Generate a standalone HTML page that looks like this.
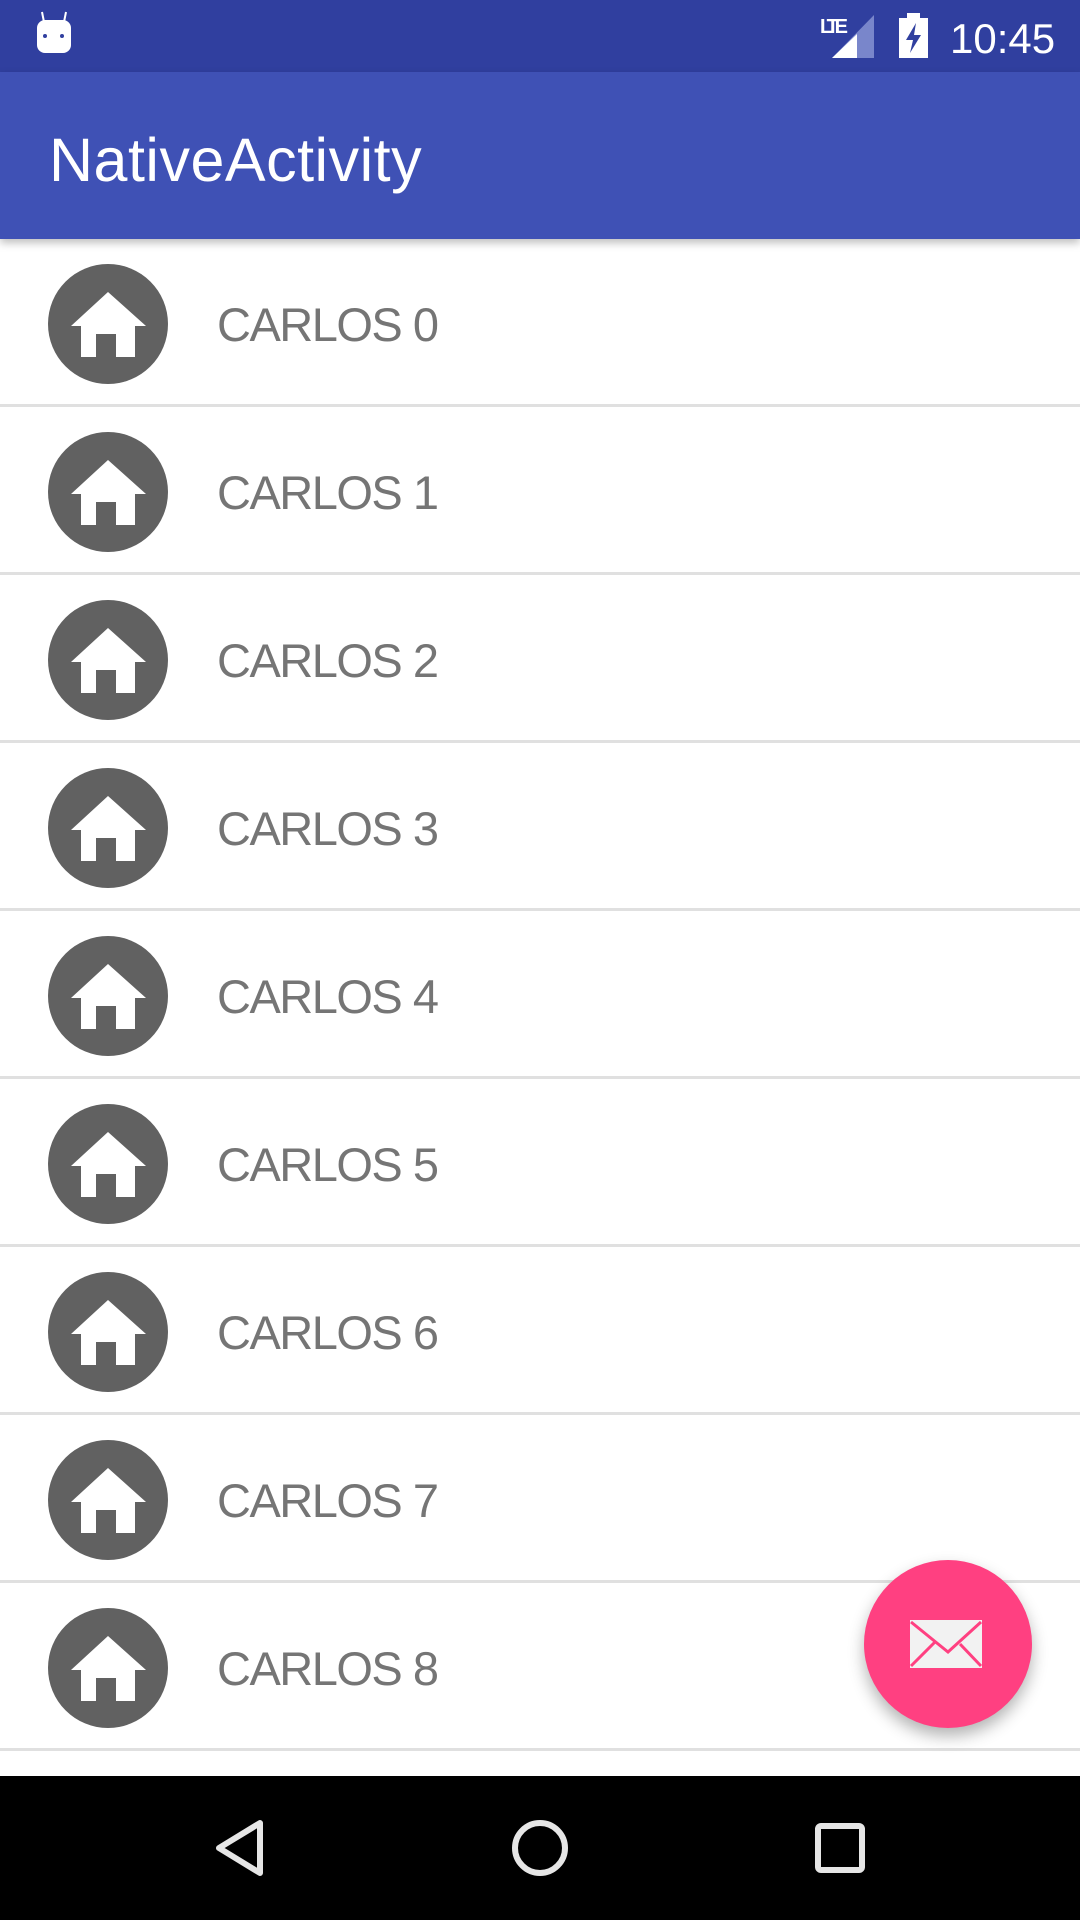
<!DOCTYPE html>
<html><head><meta charset="utf-8"><style>
*{margin:0;padding:0;box-sizing:border-box}
body{width:1080px;height:1920px;overflow:hidden;background:#fff;font-family:"Liberation Sans",sans-serif;position:relative}
.sb{position:absolute;left:0;top:0;width:1080px;height:72px;background:#303f9f}
.ab{position:absolute;left:0;top:72px;width:1080px;height:167px;background:#3f51b5;box-shadow:0 4px 8px rgba(0,0,0,.25);z-index:2}
.ab span{position:absolute;left:49px;top:88px;line-height:0;font-size:61px;letter-spacing:0.5px;color:#fff}
.row{position:absolute;left:0;width:1080px;height:168px;border-bottom:3px solid #e0e0e0}
.row .c{position:absolute;left:48px;top:25px;width:120px;height:120px;border-radius:50%;background:#616161}
.row .t{position:absolute;left:217px;top:86px;line-height:0;font-size:47px;letter-spacing:-1.5px;color:#757575}
.nav{position:absolute;left:0;top:1776px;width:1080px;height:144px;background:#000;z-index:3}
.fab{position:absolute;left:864px;top:1560px;width:168px;height:168px;border-radius:50%;background:#ff4081;box-shadow:0 8px 16px rgba(0,0,0,.3);z-index:4}
</style></head><body>
<div class="sb">
<svg width="1080" height="72" style="position:absolute;left:0;top:0">
<rect x="37" y="20" width="34" height="33" rx="8" fill="#fff"/>
<line x1="42" y1="12" x2="44" y2="22" stroke="#fff" stroke-width="2"/>
<line x1="66" y1="12" x2="64" y2="22" stroke="#fff" stroke-width="2"/>
<circle cx="45" cy="36" r="2" fill="#303f9f"/><circle cx="62" cy="36" r="2" fill="#303f9f"/>
<text x="820" y="33" font-size="20" font-weight="bold" fill="#fff" font-family="Liberation Sans Narrow, Liberation Sans" textLength="28">LTE</text>
<polygon points="832,58 874,58 874,15" fill="#7986cb"/>
<polygon points="832,58 857,58 857,34" fill="#fff"/>
<rect x="899" y="18" width="29" height="40" fill="#fff"/><rect x="907" y="13" width="13" height="6" fill="#fff"/>
<polygon points="916,23 906,40 913,40 910,53 921,35 914,35" fill="#303f9f"/>
<text x="950" y="53" font-size="42" fill="#fff">10:45</text>
</svg></div>
<div class="ab"><span>NativeActivity</span></div>
<div id="list"></div>
<script>
var h='';
for(var i=0;i<10;i++){
h+='<div class="row" style="top:'+(239+168*i)+'px"><div class="c"><svg width="120" height="120" viewBox="0 0 120 120"><polygon points="60,28 98,62 87,62 87,93 68,93 68,70 48,70 48,93 33,93 33,62 23,62" fill="#fff"/></svg></div><div class="t">CARLOS '+i+'</div></div>';
}
document.getElementById('list').innerHTML=h;
</script>
<div class="fab"><svg width="168" height="168" viewBox="0 0 168 168">
<rect x="46" y="60" width="72" height="48" fill="#f2f2f2"/>
<polyline points="47,62 84,92 117,62" fill="none" stroke="#ff4081" stroke-width="3"/>
<line x1="47" y1="106" x2="71" y2="82" stroke="#ff4081" stroke-width="3"/>
<line x1="117" y1="106" x2="96" y2="84" stroke="#ff4081" stroke-width="3"/>
</svg></div>
<div class="nav"><svg width="1080" height="144">
<polygon points="260,47 260,97 219,72" fill="none" stroke="#e6e6e6" stroke-width="6" stroke-linejoin="round"/>
<circle cx="540" cy="72" r="25" fill="none" stroke="#e6e6e6" stroke-width="6"/>
<rect x="818" y="50" width="44" height="44" rx="3" fill="none" stroke="#e6e6e6" stroke-width="6"/>
</svg></div>
</body></html>
